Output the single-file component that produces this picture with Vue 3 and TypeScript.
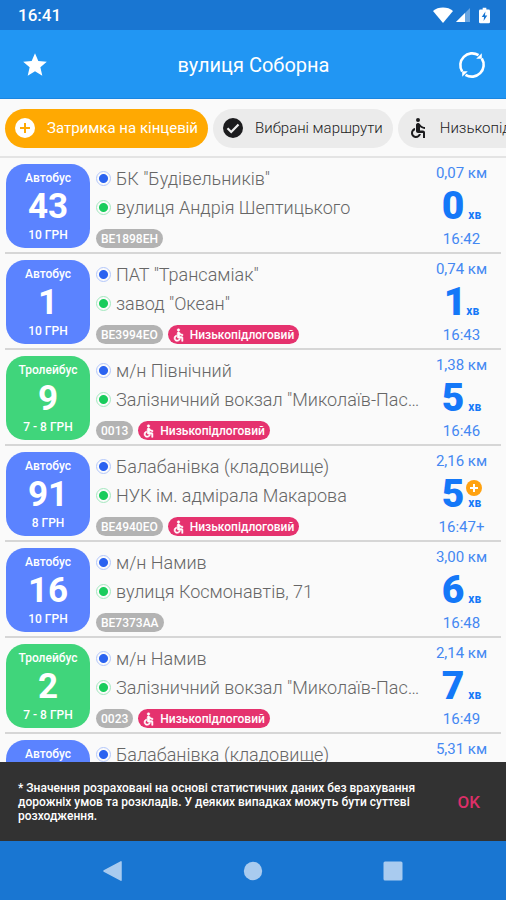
<script setup lang="ts">
interface Arrival {
  kind: 'bus' | 'trolley'
  route: string
  fare: string
  from: string
  to: string
  plate: string
  lowFloor: boolean
  distance: string
  minutes: number
  time: string
  delayed?: boolean
}

const kindNames: Record<Arrival['kind'], string> = {
  bus: 'Автобус',
  trolley: 'Тролейбус',
}

const arrivals: Arrival[] = [
  { kind: 'bus', route: '43', fare: '10 ГРН', from: 'БК "Будівельників"', to: 'вулиця Андрія Шептицького', plate: 'BE1898EH', lowFloor: false, distance: '0,07 км', minutes: 0, time: '16:42' },
  { kind: 'bus', route: '1', fare: '10 ГРН', from: 'ПАТ "Трансаміак"', to: 'завод "Океан"', plate: 'BE3994EO', lowFloor: true, distance: '0,74 км', minutes: 1, time: '16:43' },
  { kind: 'trolley', route: '9', fare: '7 - 8 ГРН', from: 'м/н Північний', to: 'Залізничний вокзал "Миколаїв-Пасажирський"', plate: '0013', lowFloor: true, distance: '1,38 км', minutes: 5, time: '16:46' },
  { kind: 'bus', route: '91', fare: '8 ГРН', from: 'Балабанівка (кладовище)', to: 'НУК ім. адмірала Макарова', plate: 'BE4940EO', lowFloor: true, distance: '2,16 км', minutes: 5, time: '16:47+', delayed: true },
  { kind: 'bus', route: '16', fare: '10 ГРН', from: 'м/н Намив', to: 'вулиця Космонавтів, 71', plate: 'BE7373AA', lowFloor: false, distance: '3,00 км', minutes: 6, time: '16:48' },
  { kind: 'trolley', route: '2', fare: '7 - 8 ГРН', from: 'м/н Намив', to: 'Залізничний вокзал "Миколаїв-Пасажирський"', plate: '0023', lowFloor: true, distance: '2,14 км', minutes: 7, time: '16:49' },
]

// The next arrival peeks in at the bottom edge of the list.
const upcoming = { kind: 'bus' as const, from: 'Балабанівка (кладовище)', distance: '5,31 км' }

const wheelchair =
  'M12 2a2 2 0 1 1 0 4a2 2 0 1 1 0-4zM19 13v-2c-1.54.02-3.09-.75-4.07-1.83l-1.29-1.43c-.17-.19-.38-.34-.61-.45-.01 0-.01-.01-.02-.01H13c-.35-.2-.75-.3-1.19-.26C10.76 7.11 10 8.04 10 9.09V15c0 1.1.9 2 2 2h5v5h2v-5.5c0-1.1-.9-2-2-2h-3v-3.45c1.29 1.07 3.25 1.94 5 1.95zm-6.17 5c-.41 1.16-1.52 2-2.83 2-1.66 0-3-1.34-3-3 0-1.31.84-2.41 2-2.83V12.1c-2.28.46-4 2.48-4 4.9 0 2.76 2.24 5 5 5 2.42 0 4.44-1.72 4.9-4h-2.07z'
</script>

<template>
  <div class="screen">
    <div class="status">
      <span class="clock">16:41</span>
      <span class="signals">
        <svg width="20" height="16" viewBox="0 0 20 16"><path d="M0 4C5-.6 15-.6 20 4L10 16z" fill="#fff" /></svg>
        <svg width="16" height="16" viewBox="0 0 16 16"><path d="M15 1v14H1z" fill="#fff" fill-opacity=".35" /><path d="M10 6v9H1z" fill="#fff" /></svg>
        <svg class="battery" width="11" height="17" viewBox="0 0 12 17"><path d="M4 0h4v2h2.500q1.500 0 1.500 1.500v12q0 1.500-1.500 1.500h-9Q0 17 0 15.500v-12Q0 2 1.500 2H4z" fill="#fff" /><path d="M7 4 3 10h2.500L5 14.500 9 8.500H6.500z" fill="#1976d2" /></svg>
      </span>
    </div>

    <header class="bar">
      <button class="icon-button" type="button" aria-label="Обране">
        <svg width="26" height="26" viewBox="1 1 22 22"><path d="M12 17.270 18.180 21l-1.640-7.030L22 9.240l-7.190-.61L12 2 9.190 8.630 2 9.240l5.460 4.730L5.820 21z" fill="#fff" /></svg>
      </button>
      <h1>вулиця Соборна</h1>
      <button class="icon-button" type="button" aria-label="Оновити">
        <svg width="28" height="28" viewBox="0 0 28 28" fill="none" stroke="#fff" stroke-width="2.600"><path d="M4.200 20.500A11.800 11.800 0 0 1 20.500 4.200M23.800 7.500A11.800 11.800 0 0 1 7.500 23.800" /><path d="M23.800 2.200v5.600h-5.600zM4.200 25.800v-5.600h5.600z" fill="#fff" stroke="none" /></svg>
      </button>
    </header>

    <nav class="chips" aria-label="Фільтри">
      <button class="chip active" type="button">
        <svg width="20" height="20" viewBox="0 0 20 20"><circle cx="10" cy="10" r="10" fill="#fff" /><path d="M10 5v10M5 10h10" stroke="#ffa902" stroke-width="2" /></svg>
        Затримка на кінцевій
      </button>
      <button class="chip" type="button">
        <svg width="20" height="20" viewBox="0 0 20 20"><circle cx="10" cy="10" r="10" fill="#1c1c1e" /><path d="m4.500 10.300 3.700 3.700L15.500 6.500" fill="none" stroke="#eee" stroke-width="2.200" /></svg>
        Вибрані маршрути
      </button>
      <button class="chip" type="button">
        <svg width="20" height="22" viewBox="2 1 20 22"><path :d="wheelchair" fill="#1c1c1e" /></svg>
        Низькопідлоговий
      </button>
    </nav>

    <main class="list">
      <article v-for="(a, i) in arrivals" :key="i" class="row">
        <div class="badge" :class="a.kind">
          <span>{{ kindNames[a.kind] }}</span>
          <strong>{{ a.route }}</strong>
          <span>{{ a.fare }}</span>
        </div>
        <div class="info">
          <div class="stop"><i class="dot blue"></i><span>{{ a.from }}</span></div>
          <div class="stop"><i class="dot green"></i><span>{{ a.to }}</span></div>
          <div class="tags">
            <span class="tag">{{ a.plate }}</span>
            <span v-if="a.lowFloor" class="tag low">
              <svg width="13" height="14" viewBox="3 1 18 22"><path :d="wheelchair" fill="#fff" stroke="#fff" stroke-width=".8" /></svg>
              Низькопідлоговий
            </span>
          </div>
        </div>
        <div class="eta">
          <span>{{ a.distance }}</span>
          <div class="wait" :class="{ tight: a.minutes === 1 }">
            <strong>{{ a.minutes }}</strong>
            <span class="unit">
              <svg v-if="a.delayed" class="plus" width="16" height="16" viewBox="0 0 16 16"><circle cx="8" cy="8" r="8" fill="#ffa210" /><path d="M8 4v8M4 8h8" stroke="#fff" stroke-width="2" /></svg>
              хв
            </span>
          </div>
          <span>{{ a.time }}</span>
        </div>
      </article>
      <article class="row">
        <div class="badge" :class="upcoming.kind">
          <span>{{ kindNames[upcoming.kind] }}</span>
        </div>
        <div class="info">
          <div class="stop"><i class="dot blue"></i><span>{{ upcoming.from }}</span></div>
        </div>
        <div class="eta">
          <span>{{ upcoming.distance }}</span>
        </div>
      </article>
    </main>

    <aside class="snackbar">
      <p>* Значення розраховані на основі статистичних даних без врахування дорожніх умов та розкладів. У деяких випадках можуть бути суттєві розходження.</p>
      <button type="button">OK</button>
    </aside>

    <footer class="system">
      <button type="button" aria-label="Назад"><svg width="20" height="20" viewBox="0 0 20 20"><path d="M1 10 18 .800V19.200z" fill="#a9cbef" stroke="#a9cbef" stroke-width="1.500" stroke-linejoin="round" /></svg></button>
      <button type="button" aria-label="Додому"><svg width="20" height="20" viewBox="0 0 20 20"><circle cx="10" cy="10" r="9.200" fill="#a9cbef" /></svg></button>
      <button type="button" aria-label="Огляд"><svg width="20" height="20" viewBox="0 0 20 20"><rect x=".5" y=".5" width="19" height="19" rx="1.500" fill="#a9cbef" /></svg></button>
    </footer>
  </div>
</template>

<style>
body {
  margin: 0;
  background: #fafafa;
}
</style>

<style scoped>
.screen {
  display: flex;
  flex-direction: column;
  height: 100vh;
  overflow: hidden;
  font-family: Roboto, "Noto Sans", sans-serif;
  color: #666;
}
.screen * {
  box-sizing: border-box;
}
button {
  padding: 0;
  border: 0;
  background: none;
  font: inherit;
  color: inherit;
}
svg {
  display: block;
  flex: none;
}
.status {
  display: flex;
  flex: none;
  align-items: center;
  justify-content: space-between;
  height: 30px;
  padding: 0 16px 0 18px;
  background: #1976d2;
  color: #fff;
}
.clock {
  font-size: 17px;
  font-weight: 500;
}
.signals {
  display: flex;
  align-items: center;
  gap: 2px;
}
.battery {
  margin-left: 6px;
}
.bar {
  display: flex;
  flex: none;
  align-items: center;
  justify-content: space-between;
  height: 69px;
  padding: 2px 20px 0 21px;
  background: #2196f3;
  border-bottom: 1px solid #1b86e0;
  color: #fff;
}
.icon-button {
  display: grid;
  place-items: center;
  width: 28px;
  height: 28px;
}
h1 {
  margin: 0;
  font-size: 20px;
  font-weight: 400;
}
.chips {
  display: flex;
  flex: none;
  align-items: center;
  gap: 5px;
  height: 59px;
  padding: 1px 5px 0;
  overflow: hidden;
  border-bottom: 2px solid #e4e4e4;
}
.chip {
  display: flex;
  flex: none;
  align-items: center;
  gap: 12px;
  height: 39px;
  padding: 0 10px;
  border-radius: 20px;
  background: #ebebeb;
  color: #222;
  font-size: 15px;
  font-weight: 300;
  white-space: nowrap;
}
.chip.active {
  background: #ffa902;
  color: #fff;
  font-weight: 400;
}
.list {
  flex: 1;
  min-height: 0;
  overflow: hidden;
  padding: 0 5px;
}
.row {
  display: flex;
  height: 96px;
  padding: 6px 0 0 1px;
  border-bottom: 2px solid #d6d6d6;
}
.badge {
  display: flex;
  flex: none;
  flex-direction: column;
  align-items: center;
  justify-content: space-between;
  width: 84px;
  height: 84px;
  padding: 6px 0 5px;
  border-radius: 19px;
  color: #fff;
  font-size: 12px;
  font-weight: 500;
  line-height: 16px;
}
.badge.bus {
  background: #5b83ff;
}
.badge.trolley {
  background: #40d57b;
}
.badge strong {
  font-size: 35px;
  line-height: 36px;
}
.info {
  flex: 1;
  min-width: 0;
  padding-left: 6px;
}
.stop {
  display: flex;
  align-items: center;
  gap: 5px;
  height: 29px;
  font-size: 18px;
  font-weight: 300;
}
.stop span {
  overflow: hidden;
  text-overflow: ellipsis;
  white-space: nowrap;
}
.dot {
  flex: none;
  width: 15px;
  height: 15px;
  border: 1px solid;
  border-radius: 50%;
}
.dot.blue {
  border-color: #b4c8fb;
  background: radial-gradient(#2b63f0 0 4px, #fafafa 5px);
}
.dot.green {
  border-color: #a5e8c0;
  background: radial-gradient(#19cc5c 0 4px, #fafafa 5px);
}
.tags {
  display: flex;
  gap: 5px;
  padding-top: 7px;
}
.tag {
  display: flex;
  align-items: center;
  height: 19px;
  padding: 0 5px;
  border-radius: 10px;
  background: #b3b3b3;
  color: #fff;
  font-size: 12px;
  font-weight: 500;
  white-space: nowrap;
}
.low {
  gap: 5px;
  padding: 0 5px 0 4px;
  background: #e5326e;
}
.eta {
  display: flex;
  flex: none;
  flex-direction: column;
  align-items: center;
  width: 79px;
  color: #4488f2;
  font-size: 15px;
  line-height: 18px;
}
.wait {
  display: flex;
  align-items: baseline;
  justify-content: center;
  gap: 4px;
  height: 48px;
  color: #1478f8;
  font-weight: 700;
}
.wait.tight {
  gap: 0;
}
.wait strong {
  font-size: 39px;
  line-height: 48px;
}
.unit {
  position: relative;
  font-size: 12px;
}
.plus {
  position: absolute;
  left: -2px;
  bottom: 16px;
}
.snackbar {
  display: flex;
  flex: none;
  align-items: center;
  justify-content: space-between;
  gap: 20px;
  min-height: 79px;
  padding: 0 26px 0 18px;
  background: #323232;
  color: #fff;
}
.snackbar p {
  flex: 1;
  max-width: 414px;
  margin: 0;
  font-size: 12px;
  font-weight: 500;
  line-height: 14px;
}
.snackbar button {
  color: #dc2f68;
  font-size: 17px;
  font-weight: 500;
}
.system {
  display: flex;
  flex: none;
  align-items: center;
  justify-content: center;
  gap: 120px;
  height: 59px;
  background: #1976d2;
}
</style>
